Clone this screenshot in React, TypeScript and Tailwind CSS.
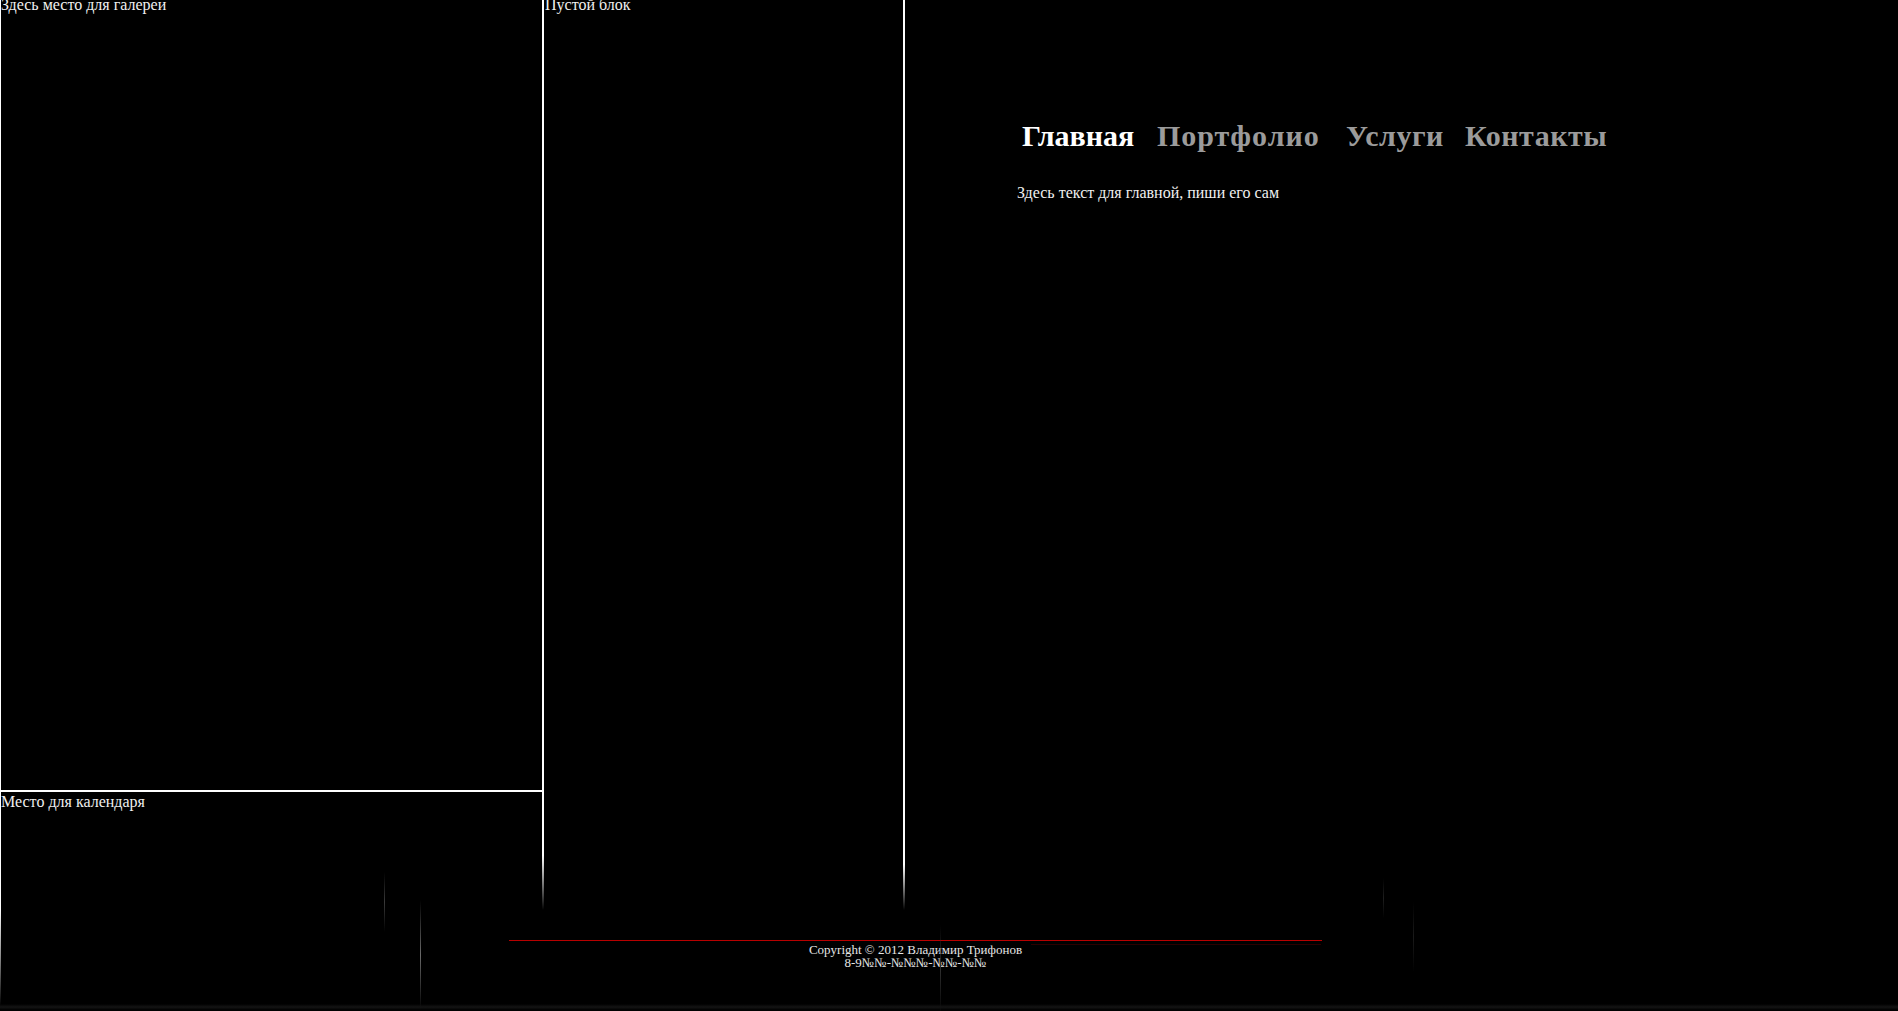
const navItems = [
  { label: "Главная", active: true, w: "w-[135px]" },
  { label: "Портфолио", active: false, w: "w-[189px] tracking-[1px]" },
  { label: "Услуги", active: false, w: "w-[119px] tracking-[0.5px]" },
  { label: "Контакты", active: false, w: "tracking-[0.5px]" },
];

// faint streaks of the dark background texture
const streaks = [
  { x: 384, top: 872, h: 60, c: "from-transparent via-[#3a3a3a] to-transparent" },
  { x: 420, top: 900, h: 110, c: "from-transparent via-[#6a6a6a] to-transparent" },
  { x: 940, top: 925, h: 90, c: "from-transparent via-[#2e2e2e] to-transparent" },
  { x: 1383, top: 878, h: 40, c: "from-transparent via-[#1e1e1e] to-transparent" },
  { x: 1413, top: 902, h: 70, c: "from-transparent via-[#1a1a1a] to-transparent" },
];

export default function App() {
  return (
    <div
      className="relative h-[1011px] w-full overflow-hidden bg-black text-[#f0f0f0]"
      style={{ fontFamily: '"Liberation Serif", "Times New Roman", serif' }}
    >
      {/* Columns */}
      <div className="flex h-[910px]">
        <div className="w-px shrink-0 bg-white" />
        <div className="flex w-[541px] shrink-0 flex-col">
          <div className="h-[790px] shrink-0">
            <p className="-mt-[3px] text-[16px] leading-none">Здесь место для галереи</p>
          </div>
          <div className="h-[2px] shrink-0 bg-white" />
          <div className="flex-1">
            <p className="pt-[1px] text-[16px] leading-[18px]">Место для календаря</p>
          </div>
        </div>
        <div className="w-[2px] shrink-0 bg-gradient-to-b from-white from-[94%] to-transparent" />
        <div className="w-[359px] shrink-0">
          <p className="-mt-[3px] pl-[1px] text-[16px] leading-none">Пустой блок</p>
        </div>
        <div className="w-[2px] shrink-0 bg-gradient-to-b from-white from-[95%] to-transparent" />

        {/* Main content */}
        <div className="flex-1 pl-[112px] pt-[119px]">
          <nav className="flex pl-[5px] text-[30px] font-bold leading-[34px]">
            {navItems.map((item) => (
              <a
                key={item.label}
                href="#"
                className={`${item.w} shrink-0 ${item.active ? "text-white" : "text-[#9b9b9b]"}`}
              >
                {item.label}
              </a>
            ))}
          </nav>
          <p className="mt-[31px] text-[16px] leading-[18px]">Здесь текст для главной, пиши его сам</p>
        </div>
      </div>

      {/* Footer */}
      <div className="flex h-[101px]">
        <div className="h-[96px] w-px shrink-0 bg-gradient-to-b from-white via-[#888] to-transparent" />
        <footer className="ml-[508px] mt-[30px] h-fit w-[813px] border-t border-[#b80000] pt-[2px] text-center text-[13px] leading-[13px] text-[#e6e6e6]">
          <p>Copyright © 2012 Владимир Трифонов</p>
          <p>8-9№№-№№№-№№-№№</p>
        </footer>
      </div>

      <div className="pointer-events-none absolute inset-0">
        {streaks.map((s, i) => (
          <div
            key={i}
            className={`absolute w-px bg-gradient-to-b ${s.c}`}
            style={{ left: s.x, top: s.top, height: s.h }}
          />
        ))}
        <div className="absolute left-[1031px] top-[944px] h-px w-[290px] bg-[#2a0000]" />
        <div className="absolute left-0 top-[1004px] h-[6px] w-[1898px] bg-gradient-to-b from-transparent via-[#141414] to-transparent" />
      </div>
    </div>
  );
}
